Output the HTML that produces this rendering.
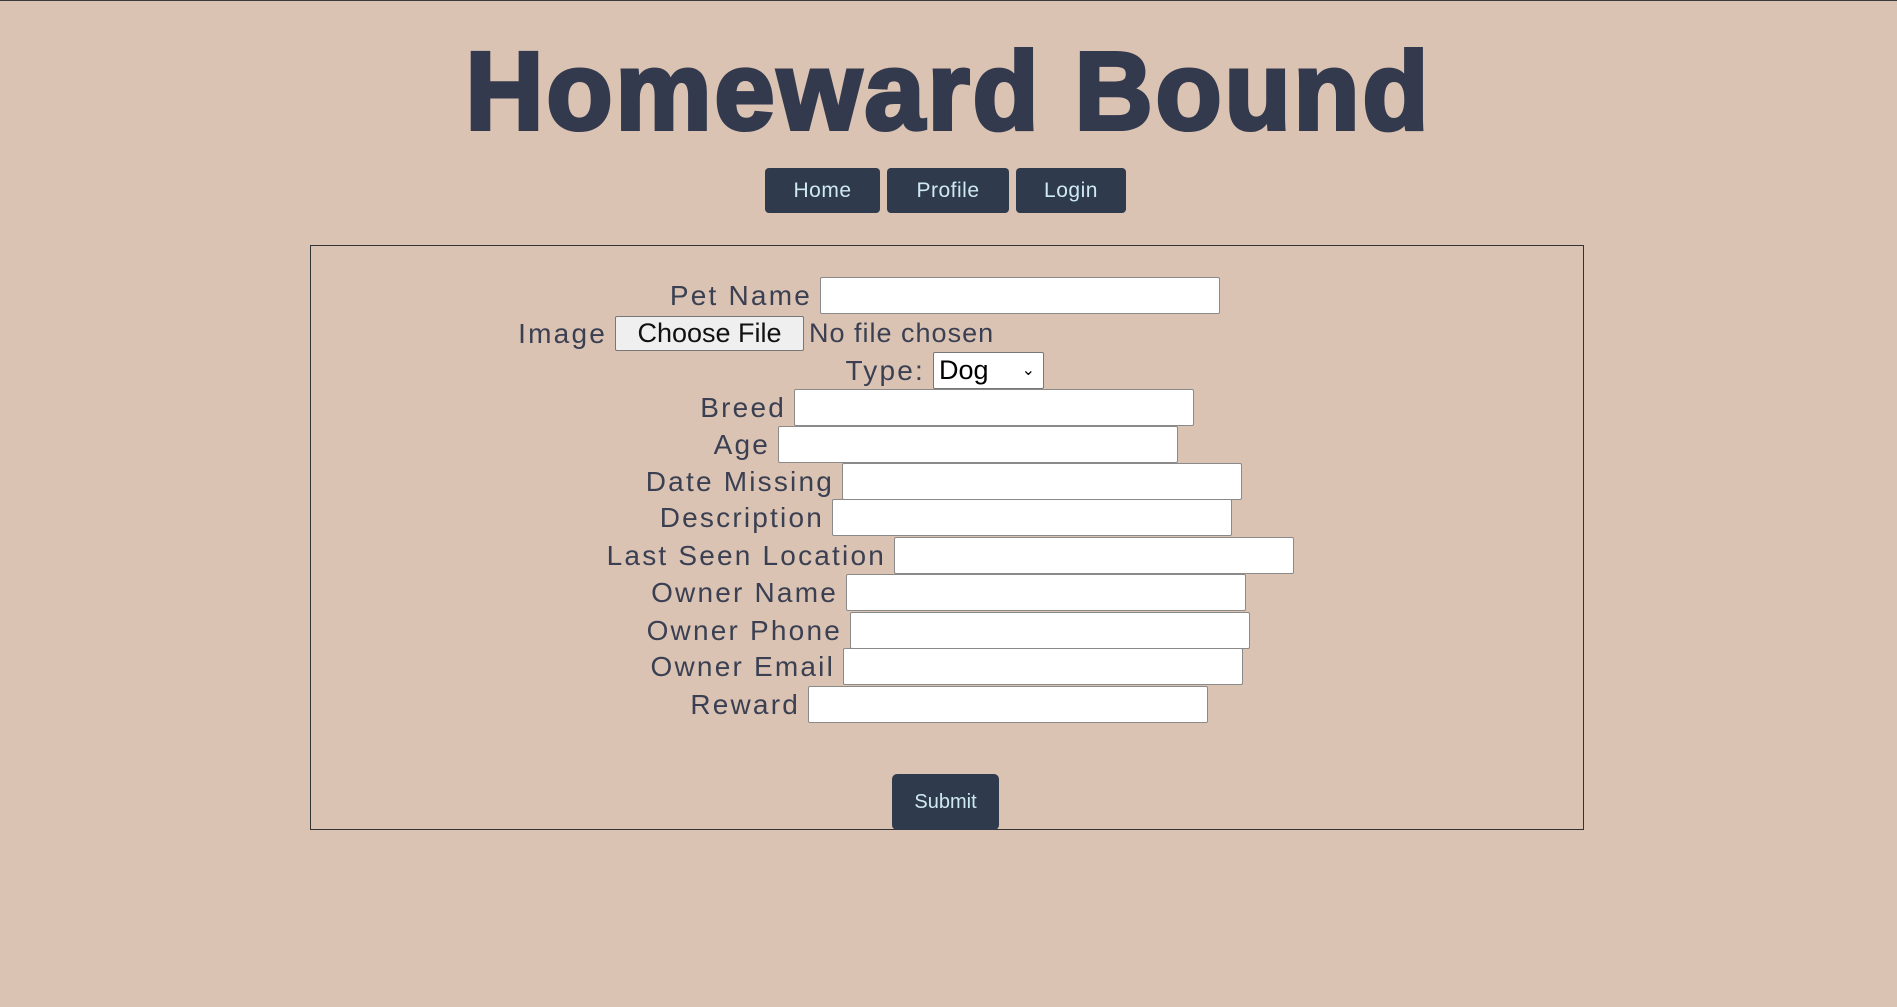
<!DOCTYPE html>
<html><head><meta charset="utf-8"><style>
html,body{margin:0;padding:0}
body{width:1897px;height:1007px;background:#dbc3b4;position:relative;overflow:hidden;border-top:1px solid #3a3a3a;box-sizing:border-box;font-family:"Liberation Sans",sans-serif}
h1{position:absolute;left:0;width:1897px;top:30px;margin:0;text-align:center;font-size:108px;font-weight:bold;color:#343a4e;letter-spacing:3px;transform:scaleY(1.02);transform-origin:top;line-height:1.1;white-space:nowrap;-webkit-text-stroke:4px #343a4e}
.nav{position:absolute;top:167px;height:45px;background:#2f3b4c;color:#cfe9f0;border-radius:4px;font-size:21px;line-height:45px;text-align:center;letter-spacing:.5px}
.box{position:absolute;left:310px;top:244px;width:1274px;height:585px;border:1px solid #333;box-sizing:border-box}
.row{position:absolute;height:37px}
.inp{width:400px;height:37px;background:#fff;border:1px solid #8a8a8a;box-sizing:border-box;border-radius:2px}
.lab{position:absolute;right:100%;margin-right:8px;top:0;line-height:37px;font-size:28px;color:#3a4052;white-space:nowrap;letter-spacing:2.2px}
.sub{position:absolute;left:892px;top:773px;width:107px;height:56px;background:#2f3b4c;color:#cfe9f0;border-radius:5px;font-size:20px;line-height:56px;text-align:center}
</style></head><body>
<h1>Homeward Bound</h1>
<div class="nav" style="left:765px;width:115px">Home</div>
<div class="nav" style="left:887px;width:122px">Profile</div>
<div class="nav" style="left:1016px;width:110px">Login</div>
<div class="box"></div>

<div class="row" style="left:820px;top:276px"><span class="lab">Pet Name</span><div class="inp"></div></div>
<div class="row" style="left:615px;top:315px"><span class="lab" style="line-height:35px">Image</span>
<div style="position:absolute;left:0;top:0;width:189px;height:35px;background:#efefef;border:1px solid #777;box-sizing:border-box;border-radius:2px;font-size:27px;line-height:33px;text-align:center;color:#111;white-space:nowrap">Choose File</div>
<div style="position:absolute;left:194px;top:0;font-size:27px;line-height:35px;color:#3a4052;white-space:nowrap;letter-spacing:1px">No file chosen</div></div>
<div class="row" style="left:933px;top:351px"><span class="lab">Type:</span>
<div style="width:111px;height:37px;background:#fff;border:1px solid #777;box-sizing:border-box;border-radius:2px;font-size:27px;line-height:35px;padding-left:5px;color:#000;position:relative">Dog<span style="position:absolute;right:8px;top:0;font-size:16px">&#8964;</span></div></div>
<div class="row" style="left:794px;top:388px"><span class="lab">Breed</span><div class="inp"></div></div>
<div class="row" style="left:778px;top:425px"><span class="lab">Age</span><div class="inp"></div></div>
<div class="row" style="left:842px;top:462px"><span class="lab">Date Missing</span><div class="inp"></div></div>
<div class="row" style="left:832px;top:498px"><span class="lab">Description</span><div class="inp"></div></div>
<div class="row" style="left:894px;top:536px"><span class="lab">Last Seen Location</span><div class="inp"></div></div>
<div class="row" style="left:846px;top:573px"><span class="lab">Owner Name</span><div class="inp"></div></div>
<div class="row" style="left:850px;top:611px"><span class="lab">Owner Phone</span><div class="inp"></div></div>
<div class="row" style="left:843px;top:647px"><span class="lab">Owner Email</span><div class="inp"></div></div>
<div class="row" style="left:808px;top:685px"><span class="lab">Reward</span><div class="inp"></div></div>
<div class="sub">Submit</div>
</body></html>
